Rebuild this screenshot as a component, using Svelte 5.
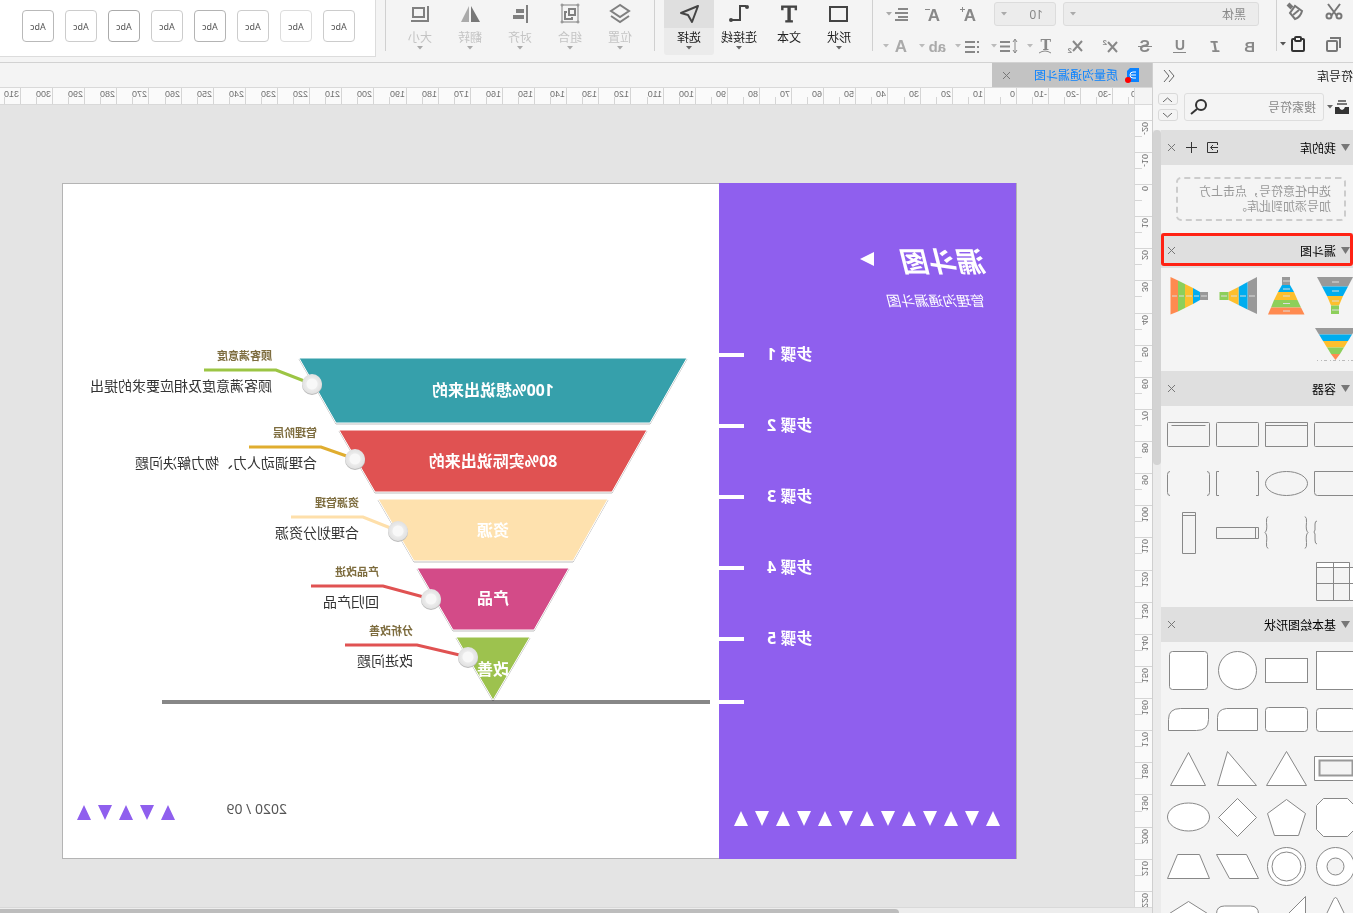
<script>
let keyword = '';
let fontName = '黑体';
let fontSize = '10';
let activeMode = '选择';
let rulerWidth = 1134;
let rulerHeight = 802;

// one ruler label every 10mm
const step = 32.13;

function makeTicks(from, length, zero) {
    const ticks = [];
    for (let i = from; zero + i * step < length - 8; i++) {
        ticks.push({
            label: i * 10,
            pos: Math.round(zero + i * step),
            half: Math.round(zero + (i + 0.5) * step)
        });
    }
    return ticks;
}

$: topTicks = makeTicks(-4, rulerWidth, 117);
$: sideTicks = makeTicks(-2, rulerHeight, 79);

const textTools = [
    { name: '加粗', svg: '<text x="4" y="18" font-size="15">B</text>' },
    { name: '斜体', svg: '<text x="4" y="18" font-size="16" font-style="italic" font-family="Liberation Mono">I</text>' },
    { name: '下划线', svg: '<text x="4" y="16" font-size="14">U</text><path d="M3 18.500h13"/>' },
    { name: '删除线', svg: '<text x="4" y="18" font-size="16">S</text><path d="M2 12.500h14"/>' },
    { name: '上标', svg: '<path d="M2 8l9 10M11 8l-9 10" stroke-width="2"/><text x="12" y="11" font-size="8">2</text>' },
    { name: '下标', svg: '<path d="M2 7l9 10M11 7l-9 10" stroke-width="2"/><text x="12" y="19" font-size="8">2</text>' }
];

const menuTools = [
    { name: '文本效果', svg: '<text x="3" y="16" font-size="14" font-family="DejaVu Serif">T</text><path d="M3 19q6-4 12 0" fill="none"/>' },
    { name: '行距', svg: '<path d="M3 6v13M1 8l2-3 2 3M1 16l2 3 2-3" stroke-width="1" fill="none"/><path d="M8 8h10M8 12.500h10M8 17h10" stroke-width="2"/>' },
    { name: '项目符号', svg: '<path d="M3 8h2M3 13h2M3 18h2M7 8h10M7 13h10M7 18h10" stroke-width="2"/>' },
    { name: '大小写', svg: '<text x="0" y="18" font-size="15" fill="#aaa">ab</text>' },
    { name: '字体颜色', svg: '<text x="3" y="18" font-size="17" fill="#aaa">A</text>' }
];

const modes = [
    { name: '形状', menu: true, svg: '<rect x="6" y="7" width="17" height="14" stroke-width="2"/>' },
    { name: '文本', menu: false, svg: '<text x="14" y="22" text-anchor="middle" font-size="23" fill="#444" font-family="DejaVu Serif">T</text>' },
    { name: '连接线', menu: true, svg: '<path d="M7 7h6v14h8" stroke-width="2" transform="translate(0 -1)"/><circle cx="6" cy="7" r="2" fill="#444" stroke="none"/><circle cx="22" cy="20" r="2" fill="#444" stroke="none"/>' },
    { name: '选择', menu: true, svg: '<path d="M5 6l17 7-7 2-4 7z" stroke-width="2" stroke-linejoin="round"/>' }
];

const arrange = [
    { name: '位置', svg: '<path d="M14 5l9 6-9 6-9-6z" stroke-width="2"/><path d="M5 16l9 6 9-6" stroke-width="2"/>' },
    { name: '组合', svg: '<path d="M6 5h16v17H6z"/><path d="M9 9h6v6H9zM17 12h2v7h-7v-2" stroke-width="2"/><g fill="#f4f4f4"><circle cx="6" cy="5" r="1"/><circle cx="22" cy="5" r="1"/><circle cx="6" cy="22" r="1"/><circle cx="22" cy="22" r="1"/></g>' },
    { name: '对齐', svg: '<path d="M7 5v18" stroke-width="2"/><path d="M10 11h8M10 17h11" stroke-width="4"/>' },
    { name: '翻转', svg: '<path d="M13 6v16H4z" fill="#777" stroke="none"/><path d="M15 6v16h8z" fill="#aaa" stroke="none"/>' },
    { name: '大小', svg: '<rect x="10" y="8" width="11" height="9" stroke-width="2"/><path d="M6 6v15h17" stroke-width="2"/>' }
];

const stylePresets = ['#ccc', '#ddd', '#ccc', '#b4b4b4', '#ccc', '#aaa', '#ccc', '#b9b9b9'];

const funnelIcons = [
    '<path fill="#999" d="M6 5h36l-5 9.500H11z"/><path fill="#00adef" d="M11 14.500h26L32 24H16z"/><path fill="#fdbf2d" d="M16 24h16l-4 9.500h-8z"/><path fill="#8ccf5a" d="M20 33.500h8V42h-8z"/><path stroke="#ddd" d="M20 10h7M20 19h7M20 29h7M20 38h7"/>',
    '<path fill="#999" d="M20 5h8v8h-8z"/><path fill="#00adef" d="M20 13h8l4 7H16z"/><path fill="#fdbf2d" d="M16 20h16l4 8H12.500z"/><path fill="#8ccf5a" d="M12.500 28H36l3 7.500H9z"/><path fill="#ff8a50" d="M9 35.500h30l3 7H5.500z"/><path stroke="#ddd" d="M20 9h7M20 17h7M20 24h7M20 31.500h7M20 39h7"/>',
    '<path fill="#999" d="M4 5l9.500 5v27.500L4 42z"/><path fill="#00adef" d="M13.500 10l9 5v18l-9 4.500z"/><path fill="#fdbf2d" d="M22.500 15l10 5v8l-10 5z"/><path fill="#8ccf5a" d="M32.500 20h9v8h-9z"/><path stroke="#ddd" d="M6 24h6M15 24h6M24 24h6M34 24h6"/>',
    '<path fill="#999" d="M4 20h8v8H4z"/><path fill="#00adef" d="M12 20l7-4v16l-7-4z"/><path fill="#fdbf2d" d="M19 16l8-4v24l-8-4z"/><path fill="#8ccf5a" d="M27 12l7-3.500v31L27 36z"/><path fill="#ff8a50" d="M34 8.500L41.500 5v37.500L34 39.500z"/><path stroke="#ddd" d="M5 24h6M13 24h5M20 24h6M28 24h5M35 24h5"/>',
    '<path fill="#999" d="M3 7h41l-4 6.500H7z"/><path fill="#00adef" d="M7 13.500h33L36 20H11z"/><path fill="#fdbf2d" d="M11 20h25l-4 6.500H15z"/><path fill="#8ccf5a" d="M15 26.500h17l-4 6.500h-9z"/><path fill="#ff8a50" d="M19 33h9l-4.500 6z"/><path stroke="#bbb" stroke-dasharray="3 2 1 3" d="M5 39.500h37"/>'
];

const containerIcons = [
    '<rect x="2.500" y="12.500" width="42" height="24" rx="1"/>',
    '<path d="M2.500 12.500h42v24h-42zM2.500 15.500h42"/>',
    '<rect x="2.500" y="12.500" width="42" height="24" rx="1"/>',
    '<rect x="2.500" y="12.500" width="42" height="24" rx="1"/><path d="M6.500 15.500h34"/>',
    '<path d="M2.500 12.500h42v21q0 3-3 3h-36q-3 0-3-3z"/>',
    '<ellipse cx="23.500" cy="24.500" rx="21" ry="12"/>',
    '<path d="M5 12.500H2.500v24H5M42 12.500h2.500v24H42"/>',
    '<path d="M5 12.500q-2.500 0-2.500 3v18q0 3 2.500 3M42 12.500q2.500 0 2.500 3v18q0 3-2.500 3"/>',
    '<path d="M42 13q2 0 2 3v6l1 2-1 2v6q0 4-2 4"/>',
    '<path d="M5 8.500q-2 1-1.500 6 1 8-1.500 10 2.500 2 1.500 10Q3 39.500 5 40.500M42 8.500q2 1 1.500 6-1 8 1.500 10-2.500 2-1.500 10 .5 5-1.500 6"/>',
    '<path d="M2.500 19.500h42v11h-42zM5.500 19.500v11"/>',
    '<path d="M16.500 4.500h13v41h-13zM16.500 7.500h13"/>',
    '<path fill="#fff" stroke="#ccc" d="M9.500 5.500h33v5h-33zM4.500 10.500h5v33h-5z"/><path d="M9.500 5.500h33v38h-33zM4.500 10.500h38M25.500 5.500v38M4.500 26.500h38M4.500 10.500v33h5"/>'
];

const basicIcons = [
    '<rect x="4.500" y="5.500" width="38" height="38"/>',
    '<rect x="2.500" y="12.500" width="42" height="24"/>',
    '<circle cx="23.500" cy="24.500" r="19"/>',
    '<rect x="4.500" y="5.500" width="38" height="38" rx="3"/>',
    '<rect x="4.500" y="13.500" width="38" height="23" rx="3"/>',
    '<rect x="2.500" y="12.500" width="42" height="24" rx="3"/>',
    '<path d="M3.500 13.500h31q9 1 9 9v13h-40z"/>',
    '<path d="M3.500 13.500h28q12 0 12 11v11h-28q-12 0-12-11z"/>',
    '<path d="M2.500 12.500h42v24h-42z"/><rect x="6.500" y="16.500" width="33" height="15" fill="#f4f4f4" stroke="#999" stroke-width="2"/>',
    '<path d="M23.500 7.500l20 34h-40z"/>',
    '<path d="M33.500 7.500l10 34h-39z" transform="matrix(-1 0 0 1 48 0) matrix(-1 0 0 1 48 0)"/>',
    '<path d="M23.500 8.500l18 33h-35z"/>',
    '<path d="M11.500 5.500h24l7 7v24l-7 7h-24l-7-7v-24z"/>',
    '<path d="M23.500 6.500l19 14-7 22h-24l-7-22z"/>',
    '<path d="M23.500 5.500l19 19-19 19-19-19z"/>',
    '<ellipse cx="23.500" cy="24" rx="21" ry="14"/>',
    '<circle cx="23.500" cy="24.500" r="19"/><circle cx="23.500" cy="24.500" r="8.500" fill="#f4f4f4"/>',
    '<circle cx="23.500" cy="24.500" r="19"/><circle cx="23.500" cy="24.500" r="14.500"/>',
    '<path d="M2.500 36.500l12-24h30l-13 24z"/>',
    '<path d="M12.500 12.500h22l10 24h-42z"/>',
    '<path d="M4.500 43.500l17-35q2-4 4 0l17 35z"/>',
    '<path d="M4.500 5.500v38h38z"/>',
    '<path d="M2.500 44V23q0-8 8-8h26q8 0 8 8v21z"/>',
    '<path d="M23.500 10.500l19 12v21h-38v-21z"/>'
];

const steps = [1, 2, 3, 4, 5];

const bands = [
    { text: '100%想说出来的', color: '#36a0ab', points: '32,175 420,175 383,240 69,240', y: 213 },
    { text: '80%实际说出来的', color: '#e05252', points: '72,247 380,247 344,309 107,309', y: 284 },
    { text: '资源', color: '#fee1ae', points: '111,316 341,316 305,378 146,378', y: 353 },
    { text: '产品', color: '#d34b88', points: '150,385 302,385 266,447 185,447', y: 421 },
    { text: '改善', color: '#9dc24e', points: '189,454 263,454 226,517', y: 492 }
];

const notes = [
    { title: '顾客满意度', text: '顾客满意度及相应要求的提出', x: 447, y: 187, knobX: 407, knobY: 201, color: '#9cc544' },
    { title: '管理阶层', text: '合理调动人力、物力解决问题', x: 402, y: 264, knobX: 364, knobY: 276, color: '#e0ad2f' },
    { title: '资源管理', text: '合理划分资源', x: 360, y: 334, knobX: 321, knobY: 348, color: '#fedfaa' },
    { title: '产品改进', text: '回归产品', x: 340, y: 403, knobX: 288, knobY: 416, color: '#e05252' },
    { title: '分析改善', text: '改进问题', x: 306, y: 462, knobX: 251, knobY: 474, color: '#e05252' }
];

function triangle(i, x, y) {
    const cx = x + i * 21;
    return i % 2 === 0
        ? `${cx},${y} ${cx + 7},${y + 15} ${cx - 7},${y + 15}`
        : `${cx},${y + 15} ${cx + 7},${y} ${cx - 7},${y}`;
}
</script>

<style>
:global(body) {
    margin: 0;
    background: #e4e4e4;
}

/* the whole editor is shown mirrored */
.app {
    display: grid;
    grid-template-columns: 201px 1fr;
    grid-template-rows: 63px 1fr;
    height: 100vh;
    overflow: hidden;
    transform: scaleX(-1);
    font-family: "Noto Sans", "Noto Sans CJK SC", sans-serif;
    font-size: 12px;
    color: #222;
}

button {
    padding: 0;
    border: none;
    background: none;
    font: inherit;
    color: inherit;
    cursor: pointer;
}

svg {
    display: block;
    flex: none;
}

/* ---------- toolbar ---------- */
.toolbar {
    grid-column: 1 / 3;
    display: flex;
    box-sizing: border-box;
    min-width: 0;
    overflow: hidden;
    background: #f4f4f4;
    border-bottom: 1px solid #d2d2d2;
}

.sep {
    flex: none;
    width: 1px;
    height: 51px;
    margin: 0 9px;
    background: #d0d0d0;
}

.sep.tight {
    margin: 0 8px 0 0;
}

.clipboard {
    flex: none;
    display: grid;
    grid-template-columns: 38px 38px;
    grid-template-rows: 24px 24px;
    row-gap: 8px;
}

.clipboard button {
    display: flex;
    align-items: center;
    gap: 4px;
    padding-left: 9px;
}

.format {
    flex: none;
    width: 395px;
    padding-top: 2px;
}

.format svg {
    font-family: "Liberation Sans", sans-serif;
    font-weight: bold;
}

.format-row {
    display: flex;
    height: 24px;
    margin-bottom: 8px;
}

.format-row.first {
    padding-left: 9px;
}

.picker {
    display: flex;
    align-items: center;
    box-sizing: border-box;
    width: 196px;
    height: 24px;
    margin-right: 7px;
    padding-right: 6px;
    background: #ececec;
    border: 1px solid #dcdcdc;
    border-radius: 3px;
}

.picker.small {
    width: 62px;
}

.picker select {
    flex: 1;
    min-width: 0;
    padding: 0 0 0 12px;
    border: none;
    appearance: none;
    background: none;
    font: inherit;
    color: #888;
}

.tool {
    display: flex;
    justify-content: center;
    width: 35px;
}

.tool-menu {
    display: flex;
    align-items: center;
    gap: 3px;
    width: 36px;
}

.tool + .tool-menu {
    margin-left: 4px;
}

.modes {
    flex: none;
    display: flex;
}

.mode {
    display: flex;
    flex-direction: column;
    align-items: center;
    width: 50px;
    height: 55px;
    color: #222;
}

.mode .icon {
    display: flex;
    justify-content: center;
    width: 100%;
    height: 28px;
}

.mode .label {
    margin-top: 2px;
    line-height: 16px;
}

.mode.disabled {
    color: #c4c4c4;
}

.mode.active {
    background: #ebebeb;
    border-radius: 0 0 3px 3px;
}

.mode.active .icon {
    background: #dfdfdf;
}

.presets {
    flex: 1 0 auto;
    display: flex;
    gap: 11px;
    box-sizing: border-box;
    height: 57px;
    padding: 10px 20px;
    background: #fff;
    border: 1px solid #dcdcdc;
    border-top: none;
    border-right: none;
}

.presets button {
    box-sizing: border-box;
    width: 32px;
    height: 32px;
    border: 1px solid #ccc;
    border-radius: 4px;
    font-size: 9px;
    color: #555;
}

/* ---------- sidebar ---------- */
.sidebar {
    display: flex;
    flex-direction: column;
    box-sizing: border-box;
    min-height: 0;
    overflow: hidden;
    background: #f4f4f4;
    border-right: 1px solid #cfcfcf;
}

.sidebar-title {
    display: flex;
    align-items: center;
    justify-content: space-between;
    height: 25px;
    padding-right: 10px;
}

.search-row {
    display: flex;
    align-items: center;
    height: 28px;
    margin: 5px 5px 9px 4px;
}

.library {
    display: flex;
    align-items: center;
    gap: 2px;
    width: 25px;
}

.search {
    flex: 1;
    display: flex;
    align-items: center;
    box-sizing: border-box;
    min-width: 0;
    height: 28px;
    padding: 0 5px 0 7px;
    border: 1px solid #dedede;
    border-radius: 3px;
}

.search input {
    flex: 1;
    min-width: 0;
    padding: 0;
    border: none;
    outline: none;
    background: none;
    font: inherit;
}

.search input::placeholder {
    color: #888;
}

.stepper {
    display: flex;
    flex-direction: column;
    gap: 4px;
    margin-left: 6px;
}

.stepper button {
    display: flex;
    align-items: center;
    justify-content: center;
    box-sizing: border-box;
    width: 20px;
    height: 12px;
    border: 1px solid #d9d9d9;
    border-radius: 3px;
}

.sidebar-body {
    flex: 1;
    display: flex;
    min-height: 0;
}

.groups {
    flex: 1;
    min-width: 0;
    overflow: hidden;
}

.scroll-track {
    width: 8px;
    background: #ebebeb;
}

.scroll-thumb {
    height: 335px;
    background: #d3d3d3;
    border-radius: 4px;
}

.group-header {
    position: relative;
    display: flex;
    align-items: center;
    gap: 5px;
    height: 35px;
    padding: 0 6px 0 3px;
    background: #dfdfdf;
    color: #000;
}

.group-header h2 {
    flex: 1;
    margin: 0;
    font-size: 12px;
    font-weight: normal;
}

.group-header button {
    margin-left: 5px;
}

.group-header.marked::after {
    content: "";
    position: absolute;
    inset: 0 0 2px;
    border: 3px solid #ff2214;
    border-radius: 3px;
    pointer-events: none;
}

.drop-hint {
    box-sizing: border-box;
    height: 44px;
    margin: 12px 15px 12px 7px;
    padding: 5px 20px 0 13px;
    border: 2px dashed #ccc;
    border-radius: 5px;
    line-height: 15px;
    color: #999;
}

.shapes {
    display: grid;
    grid-template-columns: repeat(4, 49px);
    grid-auto-rows: 49px;
    margin-left: -6px;
    padding: 4px 0 1px;
}

/* ---------- editor ---------- */
.editor {
    display: grid;
    grid-template-columns: 18px 1fr;
    grid-template-rows: 24px 18px 1fr 6px;
    min-width: 0;
    min-height: 0;
}

.tabs {
    grid-column: 1 / 3;
    display: flex;
    background: #f4f4f4;
}

.tab {
    display: flex;
    align-items: center;
    box-sizing: border-box;
    width: 160px;
    padding: 0 10px 0 12px;
    background: #c3c3c3;
    color: #0a82ff;
}

.tab a {
    flex: 1;
    margin-left: 6px;
    color: inherit;
    text-decoration: none;
}

.corner {
    background: #f4f4f4;
    border: 1px solid #d9d9d9;
    border-left: none;
}

.ruler-top {
    min-width: 0;
    overflow: hidden;
    background: #fafafa;
    border: 1px solid #d9d9d9;
    border-width: 1px 0;
}

.ruler-side {
    overflow: hidden;
    min-height: 0;
    background: #fafafa;
    border-right: 1px solid #d9d9d9;
}

.ruler-side svg {
    height: 100%;
}

.tick {
    fill: #d5d5d5;
}

.tick-label {
    font-family: "Liberation Sans", sans-serif;
    font-size: 9px;
    fill: #707070;
}

.workspace {
    overflow: hidden;
    background: #e4e4e4;
}

.slide {
    display: flex;
    box-sizing: border-box;
    width: 955px;
    height: 676px;
    margin: 78px 0 0 117px;
    background: #fff;
    border: 1px solid #b4b4b4;
}

.cover {
    display: flex;
    flex-direction: column;
    box-sizing: border-box;
    width: 297px;
    height: 676px;
    margin-top: -1px;
    padding-top: 58px;
    background: #8f5fee;
    color: #fff;
}

.cover-title {
    display: flex;
    align-items: center;
    gap: 29px;
    height: 40px;
    padding-left: 29px;
}

.cover h1 {
    margin: 0;
    font-size: 28px;
    line-height: 40px;
    font-style: italic;
}

.cover p {
    margin: 10px 0 34px;
    padding-left: 30px;
    font-size: 14px;
    line-height: 20px;
    font-style: italic;
}

.cover ol {
    display: flex;
    flex-direction: column;
    gap: 51px;
    margin: 0;
    padding: 0;
    list-style: none;
}

.cover li {
    display: flex;
    align-items: center;
    justify-content: flex-end;
    gap: 23px;
    height: 20px;
    font-size: 16px;
    line-height: 20px;
    font-weight: bold;
}

.cover li span:first-child {
    padding-bottom: 3px;
}

.dash {
    width: 25px;
    height: 4px;
    background: #fff;
}

.cover .dash.last {
    margin: 51px 0 107px;
    align-self: flex-end;
}

.diagram {
    font-family: "Noto Sans", "Noto Sans CJK SC", sans-serif;
}

.band {
    stroke: #fff;
    filter: drop-shadow(0 1px 0 rgba(0, 0, 0, 0.25));
}

.band-label {
    fill: #fff;
    font-size: 16px;
    font-weight: bold;
    text-anchor: middle;
}

.note-title {
    fill: #7d6c3e;
    font-size: 11px;
    font-weight: bold;
}

.note-text {
    fill: #333;
    font-size: 14px;
}

.date {
    fill: #555;
    font-size: 14px;
}

.scroll-x {
    grid-column: 1 / 3;
    box-sizing: border-box;
    padding-top: 1px;
    background: #ededed;
    border-top: 1px solid #d9d9d9;
}

.scroll-x div {
    width: 78%;
    height: 4px;
    margin-left: auto;
    background: #bdbdbd;
    border-radius: 4px 0 0 0;
}
</style>

{#snippet caret(color)}
    <svg width="6" height="4" viewBox="0 0 6 4"><path d="M0 0h6L3 3.500z" fill={color} /></svg>
{/snippet}

{#snippet cross()}
    <svg width="9" height="9" viewBox="0 0 9 9" stroke="#777"><path d="M1 1l7 7M8 1l-7 7" /></svg>
{/snippet}

{#snippet groupTitle(name)}
    <svg width="9" height="7" viewBox="0 0 9 7"><path d="M0 0h9L4.500 7z" fill="#777" /></svg>
    <h2>{name}</h2>
{/snippet}

{#snippet shapeGrid(icons, stroke, fill)}
    <div class="shapes">
        {#each icons as icon}
            <svg width="49" height="49" viewBox="0 0 49 49" {stroke} {fill}>{@html icon}</svg>
        {/each}
    </div>
{/snippet}

<!-- letters are filled only, lines are stroked -->
{#snippet toolIcon(svg)}
    <svg width="18" height="24" viewBox="0 0 18 24" fill="#888" stroke="#888">
        {@html svg.replaceAll('<text', '<text stroke="none"')}
    </svg>
{/snippet}

<div class="app">
    <header class="toolbar">
        <div class="clipboard">
            <button aria-label="剪切">
                <svg width="20" height="20" viewBox="0 0 20 20" fill="none" stroke="#777" stroke-width="2">
                    <path d="M4 2l9 12M16 2L7 14" /><circle cx="5" cy="14" r="2.500" /><circle cx="15" cy="14" r="2.500" />
                </svg>
            </button>
            <button aria-label="格式刷">
                <svg width="20" height="20" viewBox="0 0 20 20" fill="none" stroke="#777" stroke-width="2">
                    <path d="M4 9l7-5 5 7-5 6c-3-1-6-4-7-8z" /><path d="M7 8l6 5" /><path d="M14 6l4-4" stroke-width="4" />
                </svg>
            </button>
            <button aria-label="复制">
                <svg width="20" height="20" viewBox="0 0 20 20" fill="none" stroke="#777" stroke-width="2">
                    <rect x="7" y="7" width="10" height="10" rx="1" /><path d="M4 14V4h10" />
                </svg>
            </button>
            <button aria-label="粘贴">
                <svg width="16" height="16" viewBox="0 0 16 16" fill="none" stroke="#333" stroke-width="2">
                    <rect x="2" y="3" width="12" height="12" rx="1" /><rect x="5" y="1" width="6" height="4" rx="1" fill="#f4f4f4" />
                </svg>
                {@render caret('#555')}
            </button>
        </div>
        <div class="sep tight"></div>
        <div class="format">
            <div class="format-row first">
                <div class="picker">
                    <select aria-label="字体" bind:value={fontName}>
                        <option>黑体</option>
                        <option>宋体</option>
                    </select>
                    {@render caret('#aaa')}
                </div>
                <div class="picker small">
                    <select aria-label="字号" bind:value={fontSize}>
                        <option>10</option>
                        <option>12</option>
                    </select>
                    {@render caret('#aaa')}
                </div>
                <button class="tool" aria-label="增大字号">
                    {@render toolIcon('<text x="2" y="19" font-size="17">A</text><path d="M13 7.500h5M15.500 5v5"/>')}
                </button>
                <button class="tool" aria-label="减小字号">
                    {@render toolIcon('<text x="3" y="19" font-size="17">A</text><path d="M13 7.500h5"/>')}
                </button>
                <button class="tool-menu" aria-label="对齐方式">
                    {@render toolIcon('<path d="M5 7h10M5 11h13M5 15h10M5 18h13" stroke-width="2"/>')}
                    {@render caret('#aaa')}
                </button>
            </div>
            <div class="format-row">
                {#each textTools as tool}
                    <button class="tool" aria-label={tool.name}>{@render toolIcon(tool.svg)}</button>
                {/each}
                {#each menuTools as tool}
                    <button class="tool-menu" aria-label={tool.name}>
                        {@render toolIcon(tool.svg)}
                        {@render caret('#bbb')}
                    </button>
                {/each}
            </div>
        </div>
        <div class="sep tight"></div>
        <div class="modes">
            {#each modes as mode}
                <button class="mode" class:active={mode.name === activeMode} on:click={() => (activeMode = mode.name)}>
                    <span class="icon">
                        <svg width="28" height="28" viewBox="0 0 28 28" fill="none" stroke="#444">{@html mode.svg}</svg>
                    </span>
                    <span class="label">{mode.name}</span>
                    {#if mode.menu}{@render caret('#666')}{/if}
                </button>
            {/each}
        </div>
        <div class="sep"></div>
        <div class="modes">
            {#each arrange as item}
                <button class="mode disabled">
                    <span class="icon">
                        <svg width="28" height="28" viewBox="0 0 28 28" fill="none" stroke="#808080">{@html item.svg}</svg>
                    </span>
                    <span class="label">{item.name}</span>
                    {@render caret('#aaa')}
                </button>
            {/each}
        </div>
        <div class="sep"></div>
        <div class="presets">
            {#each stylePresets as color}
                <button style="border-color: {color}">Abc</button>
            {/each}
        </div>
    </header>

    <aside class="sidebar">
        <div class="sidebar-title">
            <span>符号库</span>
            <button aria-label="收起">
                <svg width="12" height="12" viewBox="0 0 12 12" fill="none" stroke="#666"><path d="M6 0L1 6l5 6M11 0L6 6l5 6" /></svg>
            </button>
        </div>
        <div class="search-row">
            <button class="library" aria-label="符号库">
                <svg width="14" height="14" viewBox="0 0 14 14">
                    <path d="M3 0h8v2H3zM2 3h10v2H2z" fill="#777" /><path d="M0 7h4q1 3 3 3t3-3h4v7H0z" fill="#333" />
                </svg>
                {@render caret('#666')}
            </button>
            <div class="search">
                <input type="text" aria-label="搜索符号" placeholder="搜索符号" bind:value={keyword} />
                <svg width="18" height="18" viewBox="0 0 18 18" fill="none" stroke="#333" stroke-width="2">
                    <circle cx="7" cy="7" r="5" /><path d="M11 11l6 5" />
                </svg>
            </div>
            <div class="stepper">
                <button aria-label="上一个"><svg width="9" height="5" viewBox="0 0 9 5" fill="none" stroke="#666"><path d="M0 5l4.500-4L9 5" /></svg></button>
                <button aria-label="下一个"><svg width="9" height="5" viewBox="0 0 9 5" fill="none" stroke="#666"><path d="M0 0l4.500 4L9 0" /></svg></button>
            </div>
        </div>
        <div class="sidebar-body">
            <div class="groups">
                <div class="group-header">
                    {@render groupTitle('我的库')}
                    <button aria-label="导入">
                        <svg width="11" height="11" viewBox="0 0 11 11" fill="none" stroke="#333"><path d="M.5 3V.5h10v10H.5V8M0 5.500h7M5 3l2.500 2.500L5 8" /></svg>
                    </button>
                    <button aria-label="添加">
                        <svg width="11" height="11" viewBox="0 0 11 11" stroke="#333"><path d="M0 5.500h11M5.500 0v11" /></svg>
                    </button>
                    <button aria-label="关闭">{@render cross()}</button>
                </div>
                <div class="drop-hint">选中任意符号，点击上方加号添加到此库。</div>

                <div class="group-header marked">
                    {@render groupTitle('漏斗图')}
                    <button aria-label="关闭">{@render cross()}</button>
                </div>
                {@render shapeGrid(funnelIcons, 'none', 'none')}

                <div class="group-header">
                    {@render groupTitle('容器')}
                    <button aria-label="关闭">{@render cross()}</button>
                </div>
                {@render shapeGrid(containerIcons, '#888', 'none')}

                <div class="group-header">
                    {@render groupTitle('基本绘图形状')}
                    <button aria-label="关闭">{@render cross()}</button>
                </div>
                {@render shapeGrid(basicIcons, '#888', '#fff')}
            </div>
            <div class="scroll-track"><div class="scroll-thumb"></div></div>
        </div>
    </aside>

    <main class="editor">
        <nav class="tabs">
            <div class="tab">
                <svg width="16" height="16" viewBox="0 0 16 16">
                    <path d="M1 1h9l3 3v11H1z" fill="#0a82ff" />
                    <path d="M4 5h3q3 0 3 3t-3 3H4M4 8h5" fill="none" stroke="#fff" />
                    <circle cx="12" cy="13" r="3" fill="#f00" />
                </svg>
                <a href="#funnel">质量沟通漏斗图</a>
                <button aria-label="关闭">{@render cross()}</button>
            </div>
        </nav>
        <div class="corner"></div>
        <div class="ruler-top" bind:clientWidth={rulerWidth}>
            <svg width="100%" height="16">
                {#each topTicks as tick}
                    <rect class="tick" x={tick.pos} y="0" width="1" height="16" />
                    <rect class="tick" x={tick.half} y="9" width="1" height="7" />
                    <text class="tick-label" x={tick.pos + 2} y="9">{tick.label}</text>
                {/each}
            </svg>
        </div>
        <div class="ruler-side" bind:clientHeight={rulerHeight}>
            <svg width="17">
                {#each sideTicks as tick}
                    <rect class="tick" x="0" y={tick.pos} width="17" height="1" />
                    <rect class="tick" x="10" y={tick.half} width="7" height="1" />
                    <text class="tick-label" text-anchor="end" transform="translate(10 {tick.pos + 2}) rotate(-90)">{tick.label}</text>
                {/each}
            </svg>
        </div>
        <div class="workspace">
            <div class="slide" id="funnel">
                <section class="cover">
                    <div class="cover-title">
                        <h1>漏斗图</h1>
                        <svg width="14" height="20" viewBox="0 0 14 20"><path d="M0 1v14l14-7z" fill="#fff" /></svg>
                    </div>
                    <p>管理沟通漏斗图</p>
                    <ol>
                        {#each steps as n}
                            <li><span>步骤 {n}</span><span class="dash"></span></li>
                        {/each}
                    </ol>
                    <span class="dash last"></span>
                    <svg width="297" height="15" viewBox="0 0 297 15" fill="#fff">
                        {#each Array(13) as _, i}
                            <polygon points={triangle(i, 23, 0)} />
                        {/each}
                    </svg>
                </section>
                <svg class="diagram" width="656" height="674" viewBox="0 1 656 674">
                    <rect x="9" y="517" width="548" height="4" fill="#878787" />
                    {#each bands as band}
                        <polygon class="band" points={band.points} fill={band.color} />
                        <text class="band-label" x="226" y={band.y}>{band.text}</text>
                    {/each}
                    <defs>
                        <radialGradient id="knob">
                            <stop offset="0.5" stop-color="#f8f8f8" />
                            <stop offset="0.6" stop-color="#ebebeb" />
                            <stop offset="1" stop-color="#e0e0e0" />
                        </radialGradient>
                    </defs>
                    {#each notes as note}
                        <path d="M{note.knobX} {note.knobY}L{note.x - 4} {note.y}h72" fill="none" stroke={note.color} stroke-width="3" />
                        <circle cx={note.knobX} cy={note.knobY + 1} r="10" fill="#bbb" />
                        <circle cx={note.knobX} cy={note.knobY} r="10" fill="url(#knob)" />
                        <text class="note-title" x={note.x} y={note.y - 10}>{note.title}</text>
                        <text class="note-text" x={note.x} y={note.y + 21}>{note.text}</text>
                    {/each}
                    <text class="date" x="432" y="631">2020 / 09</text>
                    <g fill="#8f5fee">
                        {#each Array(5) as _, i}
                            <polygon points={triangle(i, 551, 622)} />
                        {/each}
                    </g>
                </svg>
            </div>
        </div>
        <div class="scroll-x"><div></div></div>
    </main>
</div>
